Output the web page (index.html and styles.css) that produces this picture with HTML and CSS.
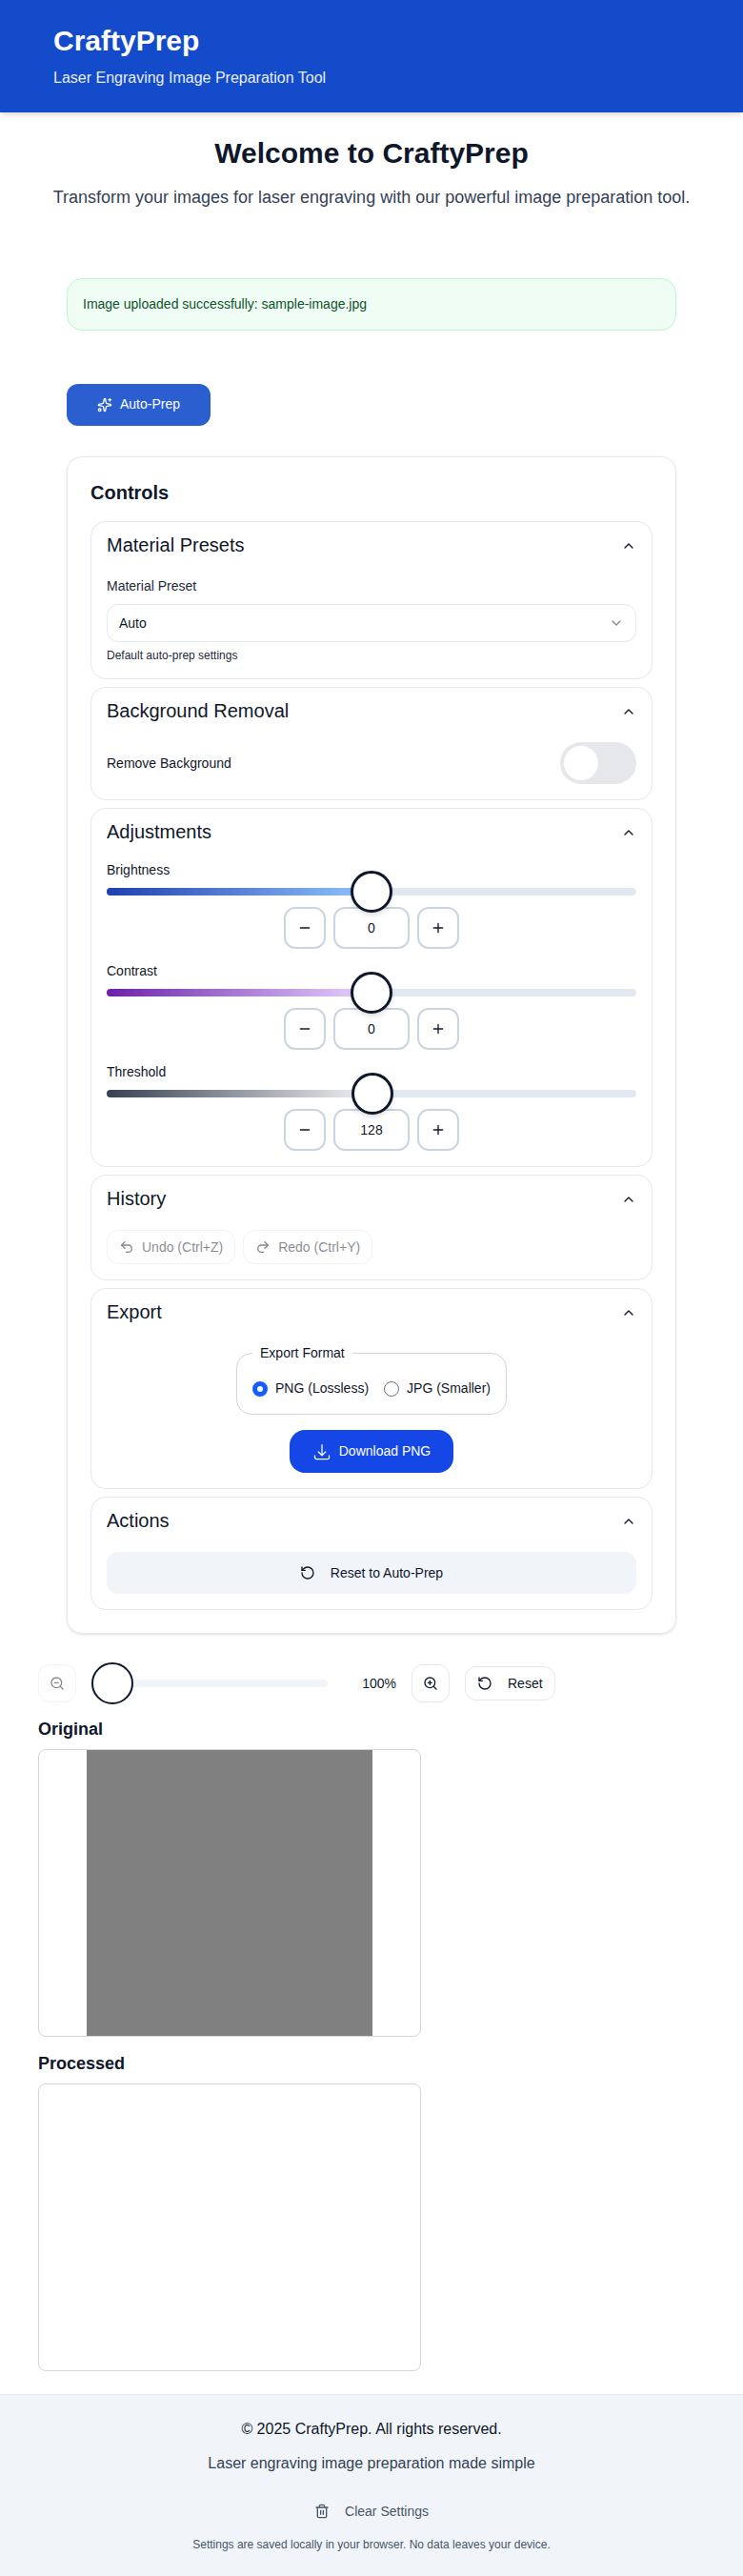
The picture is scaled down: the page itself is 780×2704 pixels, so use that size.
FILE: index.html
```html
<!DOCTYPE html>
<html lang="en">
<head>
<meta charset="utf-8">
<title>CraftyPrep</title>
<link rel="stylesheet" href="styles.css">
</head>
<body>
<svg class="defs" width="0" height="0">
  <symbol id="up" viewBox="0 0 24 24"><path d="m18 15-6-6-6 6"/></symbol>
  <symbol id="down" viewBox="0 0 24 24"><path d="m6 9 6 6 6-6"/></symbol>
  <symbol id="minus" viewBox="0 0 24 24"><path d="M5 12h14"/></symbol>
  <symbol id="plus" viewBox="0 0 24 24"><path d="M5 12h14M12 5v14"/></symbol>
  <symbol id="reset" viewBox="0 0 24 24"><path d="M3 12a9 9 0 1 0 9-9 9.75 9.75 0 0 0-6.74 2.74L3 8"/><path d="M3 3v5h5"/></symbol>
</svg>
<header class="site-header">
  <h1>CraftyPrep</h1>
  <p>Laser Engraving Image Preparation Tool</p>
</header>
<main>
  <section class="hero">
    <h2>Welcome to CraftyPrep</h2>
    <p>Transform your images for laser engraving with our powerful image preparation tool.</p>
  </section>
  <div class="workspace">
    <div class="alert">Image uploaded successfully: sample-image.jpg</div>
    <button class="btn auto-prep"><svg class="icon" viewBox="0 0 24 24"><path d="M11.017 2.814a1 1 0 0 1 1.966 0l1.051 5.558a2 2 0 0 0 1.594 1.594l5.558 1.051a1 1 0 0 1 0 1.966l-5.558 1.051a2 2 0 0 0-1.594 1.594l-1.051 5.558a1 1 0 0 1-1.966 0l-1.051-5.558a2 2 0 0 0-1.594-1.594l-5.558-1.051a1 1 0 0 1 0-1.966l5.558-1.051a2 2 0 0 0 1.594-1.594z"/><path d="M20 2v4M22 4h-4"/><circle cx="4" cy="20" r="2"/></svg>Auto-Prep</button>
    <div class="card">
      <h2>Controls</h2>
      <section class="panel">
        <h3>Material Presets<svg class="icon"><use href="#up"/></svg></h3>
        <div class="field-label">Material Preset</div>
        <div class="select">Auto<svg class="icon"><use href="#down"/></svg></div>
        <p class="hint">Default auto-prep settings</p>
      </section>
      <section class="panel">
        <h3>Background Removal<svg class="icon"><use href="#up"/></svg></h3>
        <div class="toggle-row">Remove Background<span class="toggle"><span class="knob"></span></span></div>
      </section>
      <section class="panel">
        <h3>Adjustments<svg class="icon"><use href="#up"/></svg></h3>
        <div class="sliders">
          <div class="adjust">
            <div class="name">Brightness</div>
            <div class="track"><div class="fill brightness" style="width:50%"></div><div class="thumb"></div></div>
            <div class="stepper"><button><svg class="icon"><use href="#minus"/></svg></button><div class="value">0</div><button><svg class="icon"><use href="#plus"/></svg></button></div>
          </div>
          <div class="adjust">
            <div class="name">Contrast</div>
            <div class="track"><div class="fill contrast" style="width:50%"></div><div class="thumb"></div></div>
            <div class="stepper"><button><svg class="icon"><use href="#minus"/></svg></button><div class="value">0</div><button><svg class="icon"><use href="#plus"/></svg></button></div>
          </div>
          <div class="adjust">
            <div class="name">Threshold</div>
            <div class="track"><div class="fill threshold" style="width:50.2%"></div><div class="thumb"></div></div>
            <div class="stepper"><button><svg class="icon"><use href="#minus"/></svg></button><div class="value">128</div><button><svg class="icon"><use href="#plus"/></svg></button></div>
          </div>
        </div>
      </section>
      <section class="panel">
        <h3>History<svg class="icon"><use href="#up"/></svg></h3>
        <div class="history">
          <button class="btn outline small" disabled><svg class="icon" viewBox="0 0 24 24"><path d="M9 14 4 9l5-5"/><path d="M4 9h10.5a5.5 5.5 0 0 1 0 11H11"/></svg>Undo (Ctrl+Z)</button>
          <button class="btn outline small" disabled><svg class="icon" viewBox="0 0 24 24"><path d="m15 14 5-5-5-5"/><path d="M20 9H9.500a5.500 5.500 0 0 0 0 11H13"/></svg>Redo (Ctrl+Y)</button>
        </div>
      </section>
      <section class="panel">
        <h3>Export<svg class="icon"><use href="#up"/></svg></h3>
        <div class="export">
          <fieldset>
            <legend>Export Format</legend>
            <div class="radios">
              <label><span class="radio checked"></span>PNG (Lossless)</label>
              <label><span class="radio"></span>JPG (Smaller)</label>
            </div>
          </fieldset>
          <button class="btn download"><svg class="icon thin" viewBox="0 0 24 24"><path d="M3 16.5v2.25A2.25 2.25 0 0 0 5.25 21h13.5A2.25 2.25 0 0 0 21 18.75V16.5M16.5 12 12 16.500m0 0L7.500 12m4.500 4.500V3"/></svg>Download PNG</button>
        </div>
      </section>
      <section class="panel">
        <h3>Actions<svg class="icon"><use href="#up"/></svg></h3>
        <button class="btn reset-all"><svg class="icon"><use href="#reset"/></svg>Reset to Auto-Prep</button>
      </section>
    </div>
  </div>
  <div class="preview">
    <div class="zoom-bar">
      <button class="btn outline square" disabled><svg class="icon" viewBox="0 0 24 24"><circle cx="11" cy="11" r="8"/><path d="m21 21-4.350-4.350M8 11h6"/></svg></button>
      <div class="zoom-slider"><div class="zoom-thumb"></div></div>
      <span class="percent">100%</span>
      <button class="btn outline square"><svg class="icon" viewBox="0 0 24 24"><circle cx="11" cy="11" r="8"/><path d="m21 21-4.350-4.350M11 8v6M8 11h6"/></svg></button>
      <button class="btn outline small wide-gap"><svg class="icon"><use href="#reset"/></svg>Reset</button>
    </div>
    <h2>Original</h2>
    <div class="frame"><div class="image"></div></div>
    <h2 class="second">Processed</h2>
    <div class="frame"></div>
  </div>
</main>
<footer>
  <p>© 2025 CraftyPrep. All rights reserved.</p>
  <p class="tagline">Laser engraving image preparation made simple</p>
  <button class="clear"><svg class="icon" viewBox="0 0 24 24"><path d="M3 6h18M19 6v14a2 2 0 0 1-2 2H7a2 2 0 0 1-2-2V6M8 6V4a2 2 0 0 1 2-2h4a2 2 0 0 1 2 2v2M10 11v6M14 11v6"/></svg>Clear Settings</button>
  <p class="note">Settings are saved locally in your browser. No data leaves your device.</p>
</footer>
</body>
</html>
```
FILE: styles.css
```css
*, *::before, *::after { box-sizing: border-box; }
body, h1, h2, h3, p, fieldset, legend { margin: 0; padding: 0; }
body {
  font: 14px/20px "Liberation Sans", Arial, sans-serif;
  color: #0f172a;
  background: #fff;
}
button { font: inherit; color: inherit; margin: 0; padding: 0; border: 0; background: none; }
.defs { display: block; }
.icon {
  width: 16px;
  height: 16px;
  flex: none;
  fill: none;
  stroke: currentColor;
  stroke-width: 2;
  stroke-linecap: round;
  stroke-linejoin: round;
}

.site-header {
  height: 118px;
  padding: 25px 56px 0;
  background: #134bca;
  color: #fff;
  box-shadow: 0 4px 6px -1px rgb(0 0 0 / .1), 0 2px 4px -2px rgb(0 0 0 / .1);
}
.site-header h1 { font-size: 30px; line-height: 36px; }
.site-header p { margin-top: 9px; font-size: 16px; line-height: 24px; opacity: .9; }

.hero { padding-top: 25px; text-align: center; }
.hero h2 { font-size: 30px; line-height: 36px; }
.hero p { margin-top: 14px; font-size: 18px; line-height: 28px; color: #334155; }

.workspace { width: 640px; margin: 71px auto 0; }
.alert {
  height: 55px;
  padding: 16px;
  border: 1px solid #b9f8cf;
  border-radius: 16px;
  background: #f0fdf4;
  color: #0d542b;
}
.btn {
  display: flex;
  align-items: center;
  justify-content: center;
  gap: 8px;
  height: 44px;
  border-radius: 12px;
}
.auto-prep { margin-top: 56px; padding: 0 32px 2px; background: #2b5ecf; color: #fff; }
.auto-prep .icon { margin-top: 2px; }

.card {
  margin-top: 32px;
  padding: 23px 24px 24px;
  border: 1px solid #e2e8f0;
  border-radius: 16px;
  box-shadow: 0 1px 3px rgb(0 0 0 / .1), 0 1px 2px -1px rgb(0 0 0 / .1);
}
.card > h2 { font-size: 20px; line-height: 28px; margin-bottom: 16px; }
.panel { padding: 0 16px 16px; border: 1px solid #e2e8f0; border-radius: 16px; }
.panel + .panel { margin-top: 8px; }
.panel h3 {
  display: flex;
  align-items: center;
  justify-content: space-between;
  height: 48px;
  margin-bottom: 9px;
  font-size: 20px;
  line-height: 28px;
  font-weight: 400;
}
.panel h3 .icon { margin-top: 2px; }
.field-label { color: #1e293b; }
.select {
  display: flex;
  align-items: center;
  justify-content: space-between;
  height: 40px;
  margin-top: 9px;
  padding: 0 12px;
  border: 1px solid #e2e8f0;
  border-radius: 12px;
}
.select .icon { opacity: .5; }
.hint { margin-top: 6px; font-size: 12px; line-height: 16px; color: #1e293b; }
.toggle-row { display: flex; align-items: center; justify-content: space-between; }
.toggle { width: 80px; height: 44px; padding: 4px; border-radius: 22px; background: #e5e7eb; }
.knob { display: block; width: 36px; height: 36px; border-radius: 50%; background: #fff; }

.sliders { display: grid; gap: 16px; }
.adjust { display: grid; gap: 12px; }
.name { line-height: 14px; }
.track { display: flex; align-items: center; height: 8px; border-radius: 4px; background: #e2e8f0; }
.fill { height: 8px; border-radius: 4px 0 0 4px; }
.brightness { background: linear-gradient(90deg, #1e40af, #93c5fd); }
.contrast { background: linear-gradient(90deg, #6b21a8, #e9d5ff); }
.threshold { background: linear-gradient(90deg, #374151, #f3f4f6); }
.thumb {
  position: relative;
  z-index: 1;
  flex: none;
  width: 44px;
  height: 44px;
  margin-left: -22px;
  border: 3px solid #0f172a;
  border-radius: 50%;
  background: #fff;
  box-shadow: 0 4px 6px -1px rgb(0 0 0 / .1), 0 2px 4px -2px rgb(0 0 0 / .1);
}
.stepper { display: flex; justify-content: center; gap: 8px; }
.stepper > * {
  display: flex;
  align-items: center;
  justify-content: center;
  width: 44px;
  height: 44px;
  border: 2px solid #cbd5e1;
  border-radius: 12px;
}
.stepper .value { width: 80px; }

.history { display: flex; gap: 8px; }
.outline { border: 1px solid #e2e8f0; }
.small { height: 36px; padding: 0 12px; }
.btn:disabled { opacity: .5; }

.export { display: flex; flex-direction: column; align-items: center; gap: 16px; }
fieldset { height: 75px; padding: 17px 16px 0; border: 1px solid #d1d5dc; border-radius: 16px; }
legend { padding: 0 8px; }
.radios { display: flex; gap: 16px; }
.radios label { display: flex; align-items: center; gap: 8px; }
.radio { width: 16px; height: 16px; margin-top: 2px; border: 1px solid #6b7280; border-radius: 50%; }
.radio.checked { border: 5px solid #155dfc; }
.download { height: 45px; padding: 0 24px 1px; border-radius: 16px; background: #1447e6; color: #fff; }
.download .icon { width: 20px; height: 20px; margin-top: 2px; }
.thin { stroke-width: 1.5; }
.reset-all { width: 100%; gap: 16px; background: #f1f5f9; }

.preview { padding: 30px 40px 24px; }
.zoom-bar { display: flex; align-items: center; gap: 16px; height: 44px; margin-bottom: 12px; }
.square { width: 40px; height: 40px; }
.zoom-slider { display: flex; align-items: center; width: 248px; height: 8px; border-radius: 4px; background: #f1f5f9; }
.zoom-thumb { width: 44px; height: 44px; flex: none; border: 2px solid #0f172a; border-radius: 50%; background: #fff; }
.percent { width: 56px; text-align: right; }
.wide-gap { gap: 16px; }
.preview h2 { margin-bottom: 7px; font-size: 18px; line-height: 28px; }
.preview .second { margin-top: 14px; }
.frame {
  display: flex;
  justify-content: center;
  width: 402px;
  height: 302px;
  border: 1px solid #d1d5dc;
  border-radius: 8px;
}
.image { width: 300px; height: 300px; background: #808080; }

footer {
  display: flex;
  flex-direction: column;
  align-items: center;
  height: 191px;
  padding-top: 24px;
  border-top: 1px solid #e2e8f0;
  background: #f1f5f9;
  font-size: 16px;
  line-height: 24px;
}
.tagline { margin-top: 12px; color: #334155; }
.clear { display: flex; align-items: center; gap: 16px; margin-top: 28px; font-size: 14px; line-height: 20px; color: #475569; }
.note { margin-top: 17px; font-size: 12px; line-height: 16px; color: #475569; }
```
